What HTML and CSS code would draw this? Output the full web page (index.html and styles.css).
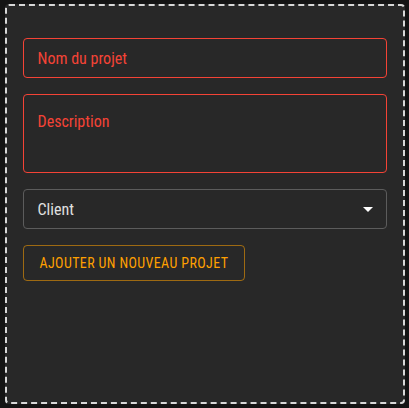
FILE: index.html
```html
<!DOCTYPE html>
<html lang="fr">
<head>
<meta charset="utf-8">
<link rel="stylesheet" href="styles.css">
</head>
<body>
<div class="panel">
  <form class="form">
    <div class="field field-error"><span class="label">Nom du projet</span></div>
    <div class="field field-error field-multi"><span class="label">Description</span></div>
    <div class="field field-select">
      <span class="value">Client</span>
      <svg class="arrow" width="10" height="5" viewBox="0 0 10 5"><path d="M0 0 L10 0 L5 5 Z" fill="#ffffff"/></svg>
    </div>
    <div class="actions">
      <button type="button" class="btn">Ajouter un nouveau projet</button>
    </div>
  </form>
</div>
</body>
</html>
```
FILE: styles.css
```css
html, body {
  margin: 0;
  padding: 0;
  height: 100%;
}
body {
  background: #141414;
  display: flex;
  align-items: center;
  justify-content: center;
  font-family: "Roboto Condensed", Roboto, "Liberation Sans", sans-serif;
}
.panel {
  box-sizing: border-box;
  width: 400px;
  height: 400px;
  border: 2px dashed #d8d8d8;
  border-radius: 4px;
  background: #282828;
  padding: 32px 16px 16px;
}
.form {
  display: flex;
  flex-direction: column;
  gap: 16px;
}
.field {
  box-sizing: border-box;
  height: 40px;
  border: 1px solid #5c5c5c;
  border-radius: 4px;
  padding: 0 14px;
  display: flex;
  align-items: center;
  font-size: 16px;
}
.field-error {
  border-color: #f44336;
  color: #f44336;
}
.field-multi {
  height: 79px;
  align-items: flex-start;
  padding-top: 17px;
}
.field-select {
  color: #e0e0e0;
  justify-content: space-between;
  padding-right: 13px;
}
.arrow {
  display: block;
}
.actions {
  display: flex;
}
.btn {
  height: 36px;
  padding: 0 16px;
  background: transparent;
  border: 1px solid rgba(255, 160, 0, 0.55);
  border-radius: 4px;
  color: #ffa000;
  font-family: inherit;
  font-size: 14px;
  font-weight: 400;
  text-transform: uppercase;
  letter-spacing: 0.38px;
}
```
